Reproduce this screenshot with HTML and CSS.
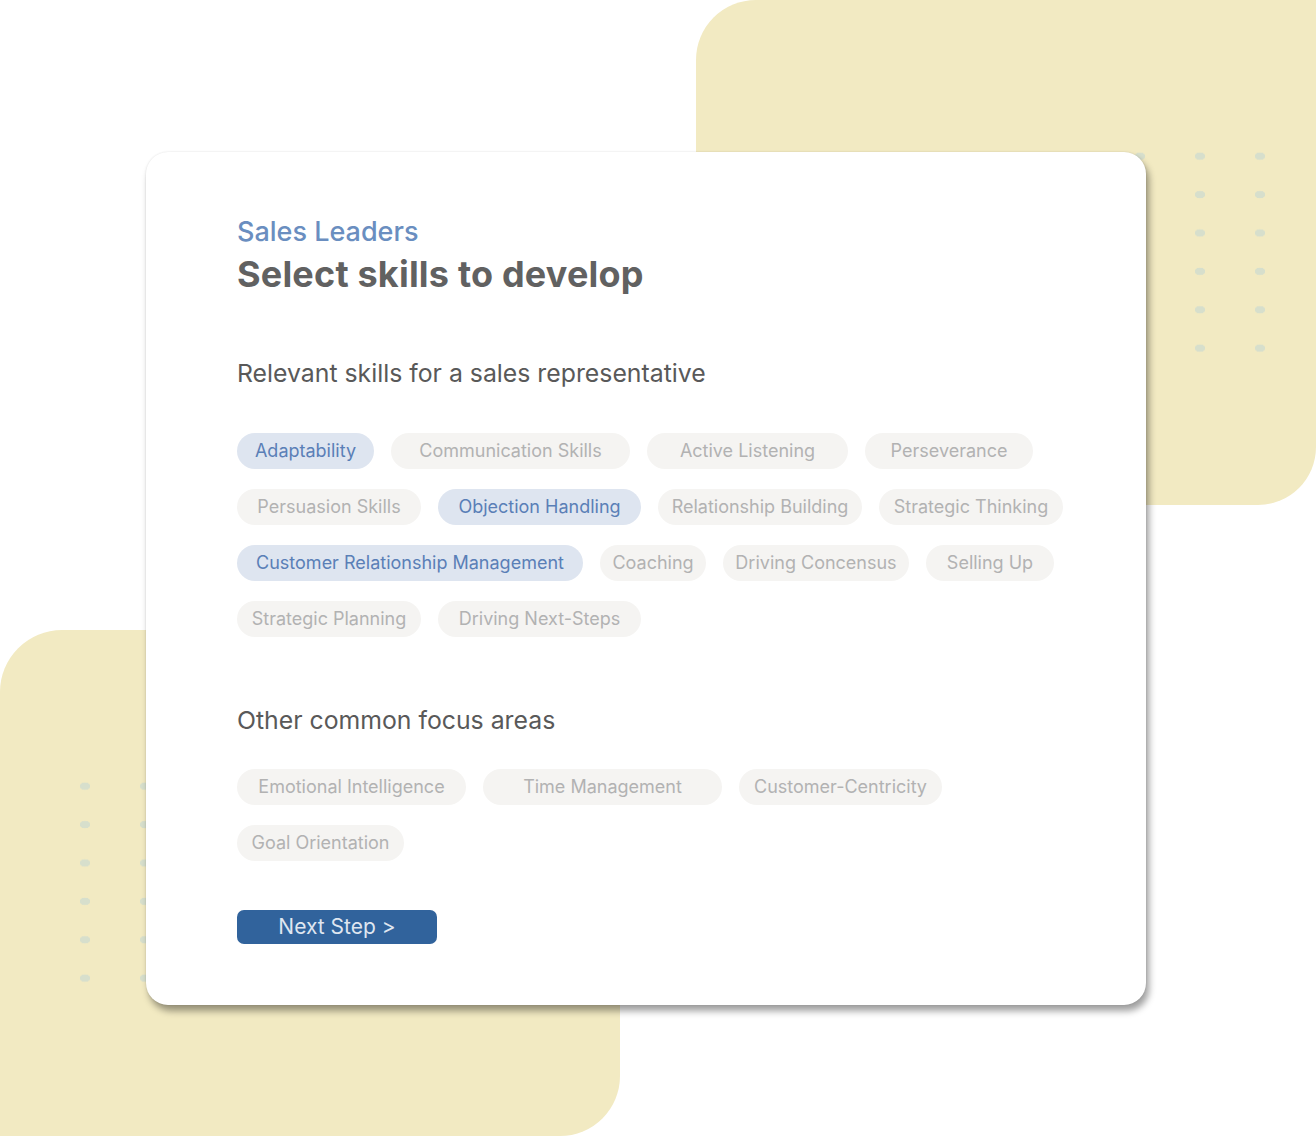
FILE: index.html
```html
<!DOCTYPE html>
<html lang="en">
<head>
<meta charset="utf-8">
<title>Select skills to develop</title>
<link rel="stylesheet" href="styles.css">
</head>
<body>
<div class="stage">
  <div class="blob blob--top"></div>
  <div class="blob blob--bottom"></div>
  <div class="dots dots--top"></div>
  <div class="dots dots--bottom"></div>

  <main class="card">
    <p class="eyebrow">Sales Leaders</p>
    <h1 class="title">Select skills to develop</h1>

    <h2 class="section-title section-title--first">Relevant skills for a sales representative</h2>
    <ul class="chips chips--primary">
      <li class="chip chip--on w-136">Adaptability</li>
      <li class="chip w-239">Communication Skills</li>
      <li class="chip w-201">Active Listening</li>
      <li class="chip w-168">Perseverance</li>
      <li class="chip w-184">Persuasion Skills</li>
      <li class="chip chip--on w-203">Objection Handling</li>
      <li class="chip w-204">Relationship Building</li>
      <li class="chip w-184">Strategic Thinking</li>
      <li class="chip chip--on w-346">Customer Relationship Management</li>
      <li class="chip w-106">Coaching</li>
      <li class="chip w-186">Driving Concensus</li>
      <li class="chip w-128">Selling Up</li>
      <li class="chip w-184">Strategic Planning</li>
      <li class="chip w-203">Driving Next-Steps</li>
    </ul>

    <h2 class="section-title section-title--second">Other common focus areas</h2>
    <ul class="chips chips--secondary">
      <li class="chip w-229">Emotional Intelligence</li>
      <li class="chip w-239">Time Management</li>
      <li class="chip w-203">Customer-Centricity</li>
      <li class="chip w-167">Goal Orientation</li>
    </ul>

    <button class="next" type="button">Next Step &gt;</button>
  </main>
</div>
</body>
</html>
```

FILE: styles.css
```css
* {
  box-sizing: border-box;
}

html,
body {
  margin: 0;
  padding: 0;
  background: #ffffff;
}

body {
  font-family: "Inter", "Roboto", "Liberation Sans", sans-serif;
}

.stage {
  position: relative;
  width: 1316px;
  height: 1136px;
  overflow: hidden;
  padding: 152px 0 0 146px;
}

/* soft yellow backdrop shapes */
.blob {
  position: absolute;
  background: #f2eac2;
}

.blob--top {
  left: 696px;
  top: 0;
  width: 620px;
  height: 505px;
  border-radius: 60px 0 58px 0;
}

.blob--bottom {
  left: 0;
  top: 630px;
  width: 620px;
  height: 506px;
  border-radius: 62px 0 60px 0;
}

/* dotted grids behind the card */
.dots {
  position: absolute;
  width: 180px;
  height: 231px;
  background-image: radial-gradient(ellipse 5.5px 4px at center, #d7dfcc 90%, rgba(215, 223, 204, 0) 100%);
  background-size: 60px 38.4px;
}

.dots--top {
  left: 1110px;
  top: 137px;
}

.dots--bottom {
  left: 55px;
  top: 767px;
}

/* main panel */
.card {
  position: relative;
  z-index: 1;
  width: 1000px;
  height: 853px;
  background: #ffffff;
  border-radius: 22px;
  box-shadow: 3px 6px 7px rgba(0, 0, 0, 0.38), 0 0 2px rgba(0, 0, 0, 0.12);
  padding: 64px 60px 0 91px;
}

.eyebrow {
  margin: 0;
  font-size: 27px;
  line-height: 32px;
  font-weight: 500;
  color: #6a8ec0;
}

.title {
  margin: 4px 0 0;
  font-size: 36px;
  line-height: 44px;
  font-weight: 700;
  color: #616161;
  letter-spacing: 0.2px;
}

.section-title {
  margin: 0;
  font-size: 24.8px;
  line-height: 30px;
  font-weight: 400;
  color: #595959;
}

.section-title--first {
  margin-top: 62px;
}

.section-title--second {
  margin-top: 68px;
}

.chips {
  list-style: none;
  margin: 0;
  padding: 0;
  display: flex;
  flex-wrap: wrap;
  gap: 20px 17px;
}

.chips--primary {
  margin-top: 45px;
}

.chips--secondary {
  margin-top: 34px;
}

.chip {
  height: 36px;
  border-radius: 18px;
  background: #f5f4f2;
  color: #b2b2b2;
  font-size: 18px;
  line-height: 36px;
  text-align: center;
  white-space: nowrap;
}

.chip--on {
  background: #dee5f0;
  color: #5a7fb7;
}

/* chip widths */
.w-106 { width: 106px; }
.w-128 { width: 128px; }
.w-136 { width: 137px; }
.w-167 { width: 167px; }
.w-168 { width: 168px; }
.w-184 { width: 184px; }
.w-186 { width: 186px; }
.w-201 { width: 201px; }
.w-203 { width: 203px; }
.w-204 { width: 204px; }
.w-229 { width: 229px; }
.w-239 { width: 239px; }
.w-346 { width: 346px; }

.next {
  display: block;
  margin-top: 49px;
  width: 200px;
  height: 34px;
  border: 0;
  border-radius: 7px;
  background: #31639c;
  color: #dfe6f0;
  font-family: inherit;
  font-size: 21px;
  line-height: 34px;
  padding: 0;
  cursor: pointer;
}
```
